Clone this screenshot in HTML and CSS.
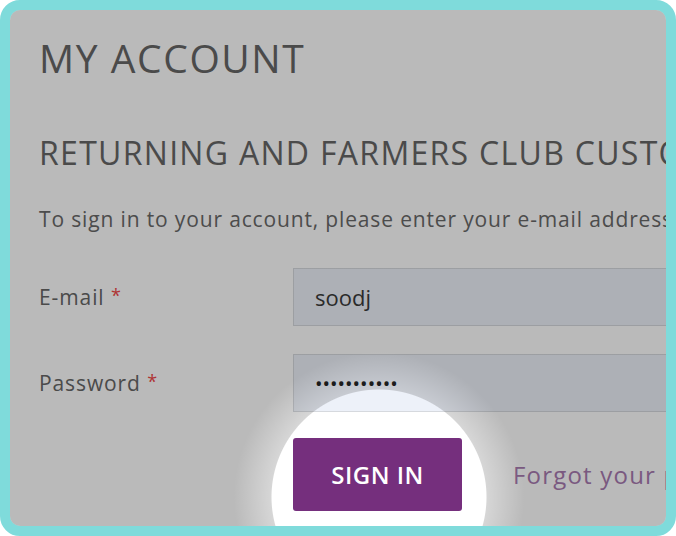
FILE: index.html
```html
<!DOCTYPE html>
<html lang="en">
<head>
    <meta charset="UTF-8">
    <meta name="viewport" content="width=device-width, initial-scale=1.0">
    <title>My account</title>
    <link rel="stylesheet" href="styles.css">
</head>
<body>
    <div class="frame">
        <div class="page">
            <h1>MY ACCOUNT</h1>
            <h2>RETURNING AND FARMERS CLUB CUSTOMERS</h2>
            <p class="intro">To sign in to your account, please enter your e-mail address and password.</p>

            <form class="login" onsubmit="return false;">
                <div class="row">
                    <label for="email">E-mail <span class="req">*</span></label>
                    <input type="text" id="email" value="soodj">
                </div>
                <div class="row">
                    <label for="password">Password <span class="req">*</span></label>
                    <input type="password" id="password" value="secretpass1">
                </div>
                <div class="actions">
                    <button type="submit">SIGN IN</button>
                    <a href="#" class="forgot">Forgot your password?</a>
                </div>
            </form>
        </div>
        <!-- dimmed overlay with a hole around the button -->
        <div class="spotlight"></div>
    </div>
</body>
</html>
```

FILE: styles.css
```css
body { margin: 0; font-family: "Open Sans", Lato, sans-serif; }

.frame { position: relative; width: 676px; height: 536px; box-sizing: border-box; border: 10px solid #7fdbdb; border-radius: 20px; overflow: hidden; background: #fff; }
.page { padding: 28px 0 0 29px; white-space: nowrap; color: #646464; }

h1 { margin: 0; font-size: 39px; font-weight: 400; line-height: 1; letter-spacing: 1.6px; color: #666; }
h2 { margin: 60px 0 0; font-size: 32px; font-weight: 400; line-height: 1; letter-spacing: 1.3px; color: #666; }
.intro { margin: 40px 0 0; font-size: 21px; line-height: 1; letter-spacing: 0.85px; color: #686868; }

.login { margin-top: 38px; }
.row { display: flex; align-items: center; margin-bottom: 28px; }
.row label { width: 254px; flex: none; font-size: 21px; letter-spacing: 0.9px; color: #666; }
.req { color: #f04848; font-size: 18px; vertical-align: 3px; }
.row input { flex: none; width: 420px; height: 58px; box-sizing: border-box; padding: 0 21px; border: 1px solid #d6d9de; background: #edf1f9; font-family: inherit; font-size: 22px; color: #3a3a3a; outline: none; }
.row input[type=password] { font-size: 20px; letter-spacing: 0; color: #222; }

.actions { display: flex; align-items: center; gap: 51px; margin: -2px 0 0 254px; }
.actions button { flex: none; width: 169px; height: 73px; border: none; border-radius: 3px; background: #752f7d; color: #fff; font-family: inherit; font-size: 24px; font-weight: 600; letter-spacing: 0.5px; cursor: pointer; }
.forgot { font-size: 24px; letter-spacing: 1.2px; color: #a77aaf; text-decoration: none; }

.spotlight { position: absolute; inset: 0; pointer-events: none;
  background: radial-gradient(circle at 369px 487px, rgba(0,0,0,0) 107px, rgba(0,0,0,.16) 108px, rgba(0,0,0,.27) 145px); }
```
